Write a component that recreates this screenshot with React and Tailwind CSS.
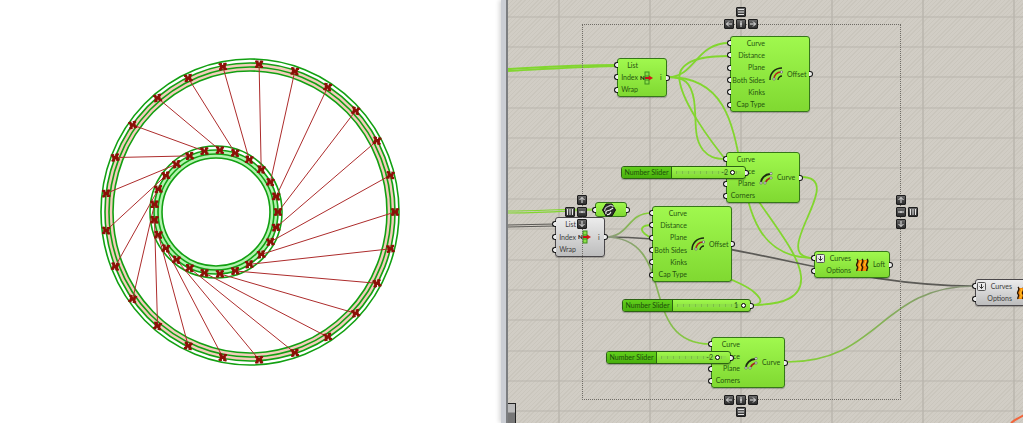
import { useState } from "react";
import clsx from "clsx";

const COUNT = 25;
const OUTER_RINGS = [
  [149, 153],
  [145, 149],
  [141, 145],
  [137, 141],
];
const INNER_RINGS = [66, 62, 58, 54];

// point number k on an ellipse, counted against the clock
const ringPoint = (cx, rx, ry, k) => {
  const a = (k * 2 * Math.PI) / COUNT;
  return [cx + rx * Math.cos(a), -ry * Math.sin(a)];
};

const STEPS = Array.from({ length: COUNT }, (_, k) => k);

function Mark({ at, angle }) {
  return (
    <g transform={`translate(${at[0]} ${at[1]}) rotate(${angle})`} stroke="#8c1008" strokeWidth="2.2">
      <path d="M-3.4 -3L3.4 3M-3.4 3L3.4 -3" />
      <path d="M-4 -2.8H4M-4 2.8H4" strokeWidth="1.8" strokeDasharray="3.4 1.2" />
      <path d="M-3 0H3" />
    </g>
  );
}

function Viewport() {
  return (
    <section className="flex w-[501px] shrink-0 items-center justify-center bg-white pt-px pr-0.5">
      <svg width="302" height="310" viewBox="-151 -155 302 310" fill="none">
        <ellipse rx="141" ry="145" stroke="#f3cdbb" strokeWidth="8" />
        <circle cx="-34" cy="0" r="58" stroke="#b2f3ae" strokeWidth="8" />
        {OUTER_RINGS.map(([rx, ry]) => (
          <ellipse key={rx} rx={rx} ry={ry} stroke="#12a012" strokeWidth="1.6" />
        ))}
        {INNER_RINGS.map((r) => (
          <circle key={r} cx="-34" cy="0" r={r} stroke="#12a012" strokeWidth="1.6" />
        ))}
        {STEPS.map((k) => {
          const [x1, y1] = ringPoint(0, 145, 148, k);
          const [x2, y2] = ringPoint(-34, 62, 62, k - 3);
          return <line key={k} x1={x1} y1={y1} x2={x2} y2={y2} stroke="#ad2c2c" strokeWidth="1" />;
        })}
        {STEPS.map((k) => (
          <g key={k}>
            <Mark at={ringPoint(0, 145, 148, k)} angle={Math.sin(k / 2) * 12} />
            <Mark at={ringPoint(-34, 62, 62, k)} angle={Math.sin(k / 2) * 8} />
          </g>
        ))}
      </svg>
    </section>
  );
}

/* ---------- ICONS ---------- */

function ListItemIcon() {
  return (
    <svg width="14" height="14" viewBox="0 0 14 14" fill="none">
      <rect x="5" y="1" width="4" height="12" fill="#8be04a" stroke="#3f8f1c" />
      <path d="M5 5H9M5 9H9" stroke="#3f8f1c" />
      <text x="0" y="9" fontSize="6" fontWeight="900" fill="#111" fontFamily="Lato, sans-serif">N</text>
      <path d="M5 7H10" stroke="#c51414" strokeWidth="2" />
      <path d="M9 4.5L13 7L9 9.5Z" fill="#d01818" />
    </svg>
  );
}

function OffsetIcon() {
  return (
    <svg width="14" height="14" viewBox="0 0 14 14" fill="none">
      <path d="M1 13C1 6 6 1 13 1" stroke="#1c2a10" strokeWidth="1.5" />
      <path d="M9 13C9 11 11 9 13 9" stroke="#1c2a10" strokeWidth="1.3" />
      <path d="M5 12C5 8 8 5 12 5" stroke="#b3261c" strokeWidth="1.6" />
      <circle cx="5" cy="12" r="1.2" fill="#ddd" stroke="#555" strokeWidth=".6" />
      <circle cx="12.5" cy="5" r="1.2" fill="#ddd" stroke="#555" strokeWidth=".6" />
    </svg>
  );
}

function OffsetLooseIcon() {
  return (
    <svg width="14" height="14" viewBox="0 0 14 14" fill="none">
      <path d="M2 11C2 8 6 3 11 3" stroke="#1c2a10" strokeWidth="2" />
      <path d="M7 11C7 9 9 8 11 7" stroke="#a3281c" strokeWidth="1.8" />
      <g fill="#e2e2e2" stroke="#555" strokeWidth=".6">
        <circle cx="2" cy="12" r="1.2" />
        <circle cx="6" cy="12" r="1.2" />
        <circle cx="12" cy="2.5" r="1.2" />
        <circle cx="12" cy="7" r="1.2" />
      </g>
    </svg>
  );
}

function LoftIcon() {
  return (
    <svg width="14" height="14" viewBox="0 0 14 14" fill="none">
      <path d="M2 2C5 4 0 6 2 8C4 10 1 11 2 13H12C11 11 14 10 12 8C10 6 15 4 12 2Z" fill="#f58a07" />
      <path d="M5 3C7 5 3 6 5 8C6 10 4 11 5 12M10 3C12 5 8 6 10 8" stroke="#ffd22e" />
      <path d="M2 1C5 4 0 6 2 8C4 10 1 11 2 13M7 1C10 4 5 6 7 8C9 10 6 11 7 13M12 1C15 4 10 6 12 8C14 10 11 11 12 13" stroke="#2b1705" strokeWidth="1.4" />
    </svg>
  );
}

function CurveParamIcon() {
  return (
    <svg width="14" height="14" viewBox="0 0 14 14" fill="none" className="shrink-0">
      <path d="M4 1H10L13.5 7L10 13H4L.5 7Z" fill="#2c2c2c" stroke="#111" />
      <path d="M2.5 8C3 3 6 4 7 3C8 2 10 2 11.5 4" stroke="#bdbdbd" strokeWidth="1.2" />
      <path d="M4 11C3 7 6 8 8 7C9 6 10 6 11 5M5 11.5C8 12 8 10 9 9" stroke="#f0f0f0" strokeWidth="1.2" />
    </svg>
  );
}

const ARROWS = {
  up: "M4 7V1.5M1.5 4L4 1.5L6.5 4",
  down: "M4 1V6.5M1.5 4L4 6.5L6.5 4",
  left: "M7 4H1.5M4 1.5L1.5 4L4 6.5",
  right: "M1 4H6.5M4 1.5L6.5 4L4 6.5",
  middleV: "M4 1V7M3 4H5",
  middleH: "M1 4H7M4 3V5",
  rows: "M1 1.5H7M1 4H7M1 6.5H7",
  columns: "M1.5 1V7M4 1V7M6.5 1V7",
};

function AlignButton({ icon }) {
  return (
    <button
      type="button"
      aria-label={icon}
      className="flex size-2.5 items-center justify-center rounded-[1px] border border-[#1d1d1d] bg-linear-to-b from-[#686868] to-[#2d2d2d]"
    >
      <svg width="8" height="8" viewBox="0 0 8 8" className="shrink-0" fill="none" stroke="#e6e6e6" strokeWidth="1">
        <path d={ARROWS[icon]} />
      </svg>
    </button>
  );
}

/* ---------- NODES ---------- */

function Port({ side }) {
  return (
    <span
      className={clsx(
        "absolute top-1/2 h-1.5 w-1 -translate-y-1/2 border border-[#151515] bg-[#eee]",
        side === "left" ? "-left-1 rounded-l-full border-r-0" : "-right-1 rounded-r-full border-l-0"
      )}
    />
  );
}

function Node({ place, labels, inputs, output, icon, grey, flatten, gap = "gap-1" }) {
  return (
    <div
      className={clsx(
        "absolute flex items-center rounded-[3px] border bg-linear-to-b shadow-[0_1px_1px_rgba(0,0,0,0.25)]",
        grey
          ? "border-[#4a474a] from-[#ececec] to-[#bdbdbd] text-[#3c3c3c]"
          : "border-[#36761a] from-[#a0f84e] to-[#80d931] text-[#265510]",
        gap,
        place
      )}
    >
      <div className="flex h-full flex-col">
        {inputs.map((name, i) => (
          <div key={name} className="relative flex flex-1 items-center justify-end">
            <Port side="left" />
            {flatten && i === 0 && (
              <svg width="9" height="9" viewBox="0 0 9 9" className="absolute left-px" fill="none">
                <rect x=".5" y=".5" width="8" height="8" rx="1" fill="#e9e9e9" stroke="#555" />
                <path d="M4.5 2V6.5M2.5 4.5L4.5 6.5L6.5 4.5" stroke="#333" />
              </svg>
            )}
            <span className={clsx("text-right", labels)}>{name}</span>
          </div>
        ))}
      </div>
      <span className="shrink-0">{icon}</span>
      {output && <span>{output}</span>}
      <Port side="right" />
    </div>
  );
}

function NumberSlider({ id, place, min, max, initial, valuePlace }) {
  const [value, setValue] = useState(initial);

  return (
    <div
      className={clsx(
        "absolute flex h-[13px] items-stretch rounded-[3px] border border-[#2c6313] bg-linear-to-b from-[#a0f84e] to-[#80d931] text-[#265510] shadow-[0_1px_1px_rgba(0,0,0,0.25)]",
        place
      )}
    >
      <label
        htmlFor={id}
        className="flex w-[50px] items-center justify-center rounded-l-[2px] border-r border-[#2c6313] bg-linear-to-b from-[#62cf1c] to-[#48b00c] whitespace-nowrap text-[#1d4d0c]"
      >
        Number Slider
      </label>
      <div className="relative flex flex-1 items-center px-1">
        <input
          id={id}
          type="range"
          min={min}
          max={max}
          value={value}
          onChange={(e) => setValue(Number(e.target.value))}
          className="h-2 w-full appearance-none bg-[repeating-linear-gradient(90deg,#7cbf45_0_1px,#8edf48_1px_6px)] bg-size-[100%_3px] bg-center bg-no-repeat [&::-webkit-slider-thumb]:size-[5px] [&::-webkit-slider-thumb]:appearance-none [&::-webkit-slider-thumb]:rounded-full [&::-webkit-slider-thumb]:border [&::-webkit-slider-thumb]:border-black [&::-webkit-slider-thumb]:bg-white"
        />
        <span className={clsx("pointer-events-none absolute", valuePlace)}>{value}</span>
      </div>
      <Port side="right" />
    </div>
  );
}

/* ---------- CANVAS ---------- */

const GRID_X = [51, 142, 233, 324, 415, 506];
const GRID_Y = [17, 47, 77, 108, 138, 168, 199, 229, 260, 290, 320, 351, 381, 411];

const GREEN_WIRES = [
  "M0 69C37 67 67 65 108 65",
  "M0 71C37 69 67 67 108 66",
  "M160 77C187 77 188 43 221 43",
  "M220 56C182 56 168 66 172 83C176 103 198 136 222 165",
  "M160 77C176 77 183 82 186 100C189 122 185 137 195 150C201 157 207 159 217 159",
  "M160 77C272 77 194 258 306 258",
  "M293 177C342 177 257 258 306 258",
  "M242 305C277 305 295 297 293 276C291 255 267 226 247 196",
  "M242 305C252 305 257 302 247 293C240 286 230 283 220 278",
  "M144 225C134 225 131 229 137 234L147 241",
];

function Wires() {
  return (
    <svg className="absolute inset-0 size-full" fill="none">
      <defs>
        <linearGradient id="fadeIn" x1="0" x2="1">
          <stop offset="0" stopColor="#8b9480" />
          <stop offset="1" stopColor="#84d630" />
        </linearGradient>
        <linearGradient id="fadeOut" x1="0" x2="1">
          <stop offset="0" stopColor="#84d630" />
          <stop offset="1" stopColor="#858c7c" />
        </linearGradient>
      </defs>
      <g stroke="#b9b5ad">
        {GRID_X.map((x) => (
          <line key={x} x1={x} x2={x} y1="0" y2="100%" strokeWidth="2" strokeOpacity=".7" />
        ))}
        {GRID_Y.map((y) => (
          <line key={y} x1="0" x2="100%" y1={y} y2={y} />
        ))}
      </g>
      <g stroke="#82d62f" strokeWidth="1.8">
        {GREEN_WIRES.map((d) => (
          <path key={d} d={d} />
        ))}
        <path d="M0 211C30 211 55 209 87 209M0 213C30 213 55 211 87 210" strokeWidth="1.2" />
      </g>
      <g stroke="#5b5a56" strokeWidth="1.6">
        <path d="M97 237C237 237 327 286 467 286" />
        <path d="M0 225L47 224M0 227L47 226" strokeWidth="1.1" />
      </g>
      <path d="M97 237C122 237 119 213 143 213" stroke="url(#fadeIn)" strokeWidth="1.7" />
      <path d="M97 237C172 237 127 344 203 344" stroke="url(#fadeIn)" strokeWidth="1.7" />
      <path d="M279 362C372 362 372 286 467 286" stroke="url(#fadeOut)" strokeWidth="1.7" />
      <path d="M503 423Q508 419 516 415" stroke="#f2663c" strokeWidth="2" />
    </svg>
  );
}

const OFFSET_INPUTS = ["Curve", "Distance", "Plane", "Both Sides", "Kinks", "Cap Type"];
const LOOSE_INPUTS = ["Curve", "Distance", "Plane", "Corners"];
const ITEM_INPUTS = ["List", "Index", "Wrap"];
const LOFT_INPUTS = ["Curves", "Options"];

function Canvas() {
  return (
    <main className="relative min-w-0 flex-1 overflow-hidden bg-[#cfcbc2] bg-[repeating-linear-gradient(135deg,#cac6bd_0_1px,#d1cdc5_1px_3px)] font-[Lato,sans-serif] text-[7px] leading-none">
      <Wires />

      <Node place="left-[109px] top-[58px] h-[39px] w-[50px]" labels="w-5" gap="gap-0.5" inputs={ITEM_INPUTS} icon={<ListItemIcon />} output={<span className="pl-1">i</span>} />
      <Node place="left-[222px] top-9 h-[76px] w-20" labels="w-[34px]" inputs={OFFSET_INPUTS} icon={<OffsetIcon />} output="Offset" />
      <Node place="left-[218px] top-[152px] h-[51px] w-[74px]" labels="w-7" inputs={LOOSE_INPUTS} icon={<OffsetLooseIcon />} output="Curve" />
      <NumberSlider id="slider-top" place="left-[113px] top-[166px] w-[125px]" min={-20} max={0} initial={-2} valuePlace="right-[17px]" />

      {/* CURVE PARAM */}
      <div className="absolute left-[87px] top-[202px] flex h-[15px] w-8 items-center justify-center rounded-[3px] border border-[#36761a] bg-linear-to-b from-[#a0f84e] to-[#80d931] pr-1">
        <Port side="left" />
        <CurveParamIcon />
        <Port side="right" />
      </div>

      <Node grey place="left-[47px] top-[217px] h-10 w-[50px]" labels="w-5" gap="gap-0.5" inputs={ITEM_INPUTS} icon={<ListItemIcon />} output={<span className="pl-1">i</span>} />
      <Node place="left-36 top-[206px] h-[76px] w-20" labels="w-[34px]" inputs={OFFSET_INPUTS} icon={<OffsetIcon />} output="Offset" />
      <NumberSlider id="slider-middle" place="left-[114px] top-[299px] w-[129px]" min={0} max={1} initial={1} valuePlace="right-3" />
      <Node flatten place="left-[306px] top-[251px] h-[27px] w-[76px]" labels="w-9" inputs={LOFT_INPUTS} icon={<LoftIcon />} output="Loft" />
      {/* runs past the right edge, so only its inputs and icon show */}
      <Node grey flatten place="left-[467px] top-[279px] h-[27px] w-[76px]" labels="w-9" inputs={LOFT_INPUTS} icon={<LoftIcon />} />
      <Node place="left-[203px] top-[337px] h-[51px] w-[74px]" labels="w-7" inputs={LOOSE_INPUTS} icon={<OffsetLooseIcon />} output="Curve" />
      <NumberSlider id="slider-bottom" place="left-[98px] top-[351px] w-[125px]" min={-20} max={0} initial={-2} valuePlace="right-[17px]" />

      {/* SELECTION FRAME WITH ALIGN BUTTONS */}
      <div className="pointer-events-none absolute left-[74px] top-6 h-[376px] w-[319px] border border-dotted border-[#6f6c66]" />
      <div className="absolute left-[216px] top-[7px] flex flex-col items-center gap-0.5">
        <AlignButton icon="rows" />
        <div className="flex gap-0.5">
          <AlignButton icon="left" />
          <AlignButton icon="middleV" />
          <AlignButton icon="right" />
        </div>
      </div>
      <div className="absolute left-[57px] top-[195px] flex items-center gap-0.5">
        <AlignButton icon="columns" />
        <div className="flex flex-col gap-0.5">
          <AlignButton icon="up" />
          <AlignButton icon="middleH" />
          <AlignButton icon="down" />
        </div>
      </div>
      <div className="absolute left-[388px] top-[195px] flex items-center gap-0.5">
        <div className="flex flex-col gap-0.5">
          <AlignButton icon="up" />
          <AlignButton icon="middleH" />
          <AlignButton icon="down" />
        </div>
        <AlignButton icon="columns" />
      </div>
      <div className="absolute left-[216px] top-[395px] flex flex-col items-center gap-0.5">
        <div className="flex gap-0.5">
          <AlignButton icon="left" />
          <AlignButton icon="middleV" />
          <AlignButton icon="right" />
        </div>
        <AlignButton icon="rows" />
      </div>

      <div className="absolute bottom-0 left-0 h-5 w-2 border-t border-r border-[#222] bg-linear-to-b from-[#bbb] from-40% to-[#777] to-50%" />
    </main>
  );
}

export default function App() {
  return (
    <div className="flex h-screen overflow-hidden bg-white">
      <Viewport />
      <div className="w-[7px] shrink-0 border-r-2 border-[#7c7e80] bg-[#cbced4] shadow-[-2px_0_4px_rgba(0,0,0,0.15)]" />
      <Canvas />
    </div>
  );
}
